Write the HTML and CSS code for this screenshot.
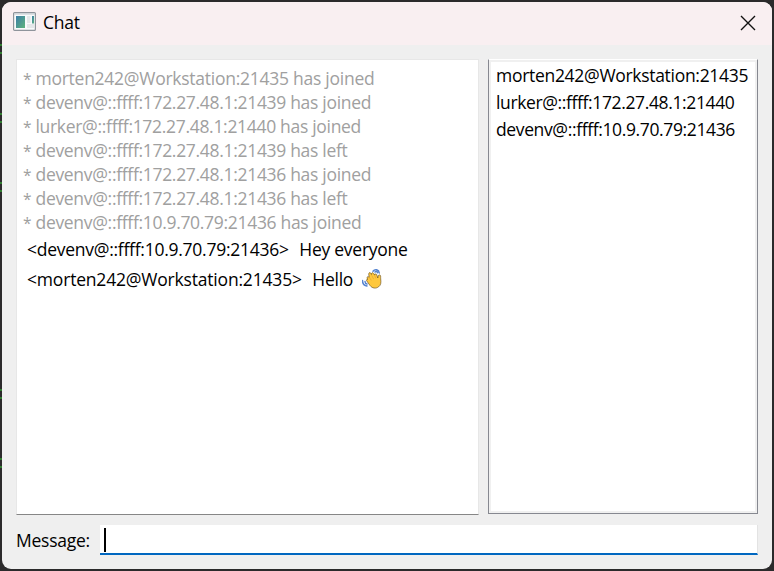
FILE: index.html
```html
<!DOCTYPE html>
<html lang="en">
<head>
<meta charset="utf-8">
<title>Chat</title>
<link rel="stylesheet" href="styles.css">
</head>
<body>
<svg class="backdrop" width="2" height="571" viewBox="0 0 2 571"><path d="M1 44v2M1 52v2M1 113v2M1 121v2M1 182v2M1 190v2M1 389v2M1 397v2M1 458v2M1 466v2" stroke="#2f7d2f" stroke-width="2"/></svg>
<div class="window">
  <header class="titlebar">
    <svg class="app-icon" width="23" height="20" viewBox="0 0 23 20">
      <defs><linearGradient id="g" x1="0" y1="0" x2="1" y2="1"><stop offset="0" stop-color="#3d7da8"/><stop offset="1" stop-color="#5db47c"/></linearGradient></defs>
      <rect x=".6" y=".6" width="21.8" height="17.8" rx="1" fill="#f8fafb" stroke="#8f949b" stroke-width="1.2"/>
      <path d="M1 2H22" stroke="#c3c8ce" stroke-width="1"/>
      <rect x="3" y="4" width="9" height="12" fill="url(#g)"/>
      <rect x="14" y="4" width="3.5" height="7" fill="#e4e7e9"/>
      <rect x="14" y="12" width="7" height="4" fill="#e4e7e9"/>
      <rect x="19" y="4" width="2" height="7.5" fill="url(#g)"/>
    </svg>
    <h1 class="title">Chat</h1>
    <svg class="close" width="16" height="16" viewBox="0 0 16 16"><path d="M1 1L15 15M15 1L1 15" stroke="#111" stroke-width="1.4" fill="none"/></svg>
  </header>
  <main class="panes">
    <section class="log">
      <p class="event"><span class="star">*</span>morten242@Workstation:21435 has joined</p>
      <p class="event tight"><span class="star">*</span>devenv@::ffff:172.27.48.1:21439 has joined</p>
      <p class="event tight"><span class="star">*</span>lurker@::ffff:172.27.48.1:21440 has joined</p>
      <p class="event tight"><span class="star">*</span>devenv@::ffff:172.27.48.1:21439 has left</p>
      <p class="event tight"><span class="star">*</span>devenv@::ffff:172.27.48.1:21436 has joined</p>
      <p class="event tight"><span class="star">*</span>devenv@::ffff:172.27.48.1:21436 has left</p>
      <p class="event tight"><span class="star">*</span>devenv@::ffff:10.9.70.79:21436 has joined</p>
      <p class="message"><span>&lt;devenv@::ffff:10.9.70.79:21436&gt;</span><span>Hey everyone</span></p>
      <p class="message"><span class="loose">&lt;morten242@Workstation:21435&gt;</span><span>Hello</span>
        <svg class="wave" role="img" aria-label="waving hand" width="22" height="22" viewBox="0 0 22 22">
          <path d="M11 3.2C13 .6 16.8 1.5 17.3 5M13 4c1-1 2.3-.6 2.500.7M.5 12.500c0 3 1.500 5 4.500 5.500M3 13.500c.1 1.400.8 2.200 2 2.500" fill="none" stroke="#5684d0" stroke-width="1.5" stroke-linecap="round"/>
          <path d="M5 9.3c.6-.9 1.6-.7 2.2.1L6.7 6.2c-.1-1.8 1.7-2.1 2.2-.7l.5 1c-.2-1.9 1.7-2.5 2.4-.9l.7 1.5c.1-1.5 1.9-1.6 2.3-.3l1 3.2c.2-1.4.4-3.2 1.7-3.1 1.6.1 1 2.1 1.2 3.9.5 4.1.2 6.3-2.1 8-2.8 2.2-6.5 1.5-8.6-1.3L4.8 13c-.8-1.2.2-2.1 1.2-1.6L5.1 10.600z" fill="#ffc83d" stroke="#5e4515" stroke-width=".6" stroke-linejoin="round"/>
          <path d="M7.3 9.3l2 3M9.6 7.100l2 4M12.600 7.200l1.200 3.100" stroke="#e0a032" stroke-width=".6" fill="none"/>
        </svg>
      </p>
    </section>
    <ul class="users">
      <li class="first">morten242@Workstation:21435</li>
      <li class="tighter">lurker@::ffff:172.27.48.1:21440</li>
      <li class="tighter">devenv@::ffff:10.9.70.79:21436</li>
    </ul>
  </main>
  <footer class="compose">
    <label class="label">Message:</label>
    <div class="input"><span class="caret"></span></div>
  </footer>
</div>
</body>
</html>
```

FILE: styles.css
```css
* { box-sizing: border-box; margin: 0; padding: 0; }
body { width: 774px; height: 571px; overflow: hidden; background: #2b2a2b; padding: 2px;
  font: 17.5px/24px "Open Sans", "Noto Sans", sans-serif; letter-spacing: -.26px; font-variant-ligatures: none; color: #000; }
.backdrop { position: absolute; left: 0; top: 0; }
.window { width: 770px; height: 567px; border-radius: 9px; background: #efefef; overflow: hidden; display: flex; flex-direction: column; }
.titlebar { height: 43px; background: #f9eff1; display: flex; align-items: center; padding: 0 16px 3px 11px; }
.title { font-size: 17.5px; font-weight: 400; margin-left: 7px; padding-bottom: 1px; flex: 1; }
.close { margin-top: 1px; }
.panes { display: flex; height: 470px; padding: 14px 14px 0; gap: 9px; }
.log { width: 463px; height: 456px; background: #fff; padding: 6px 6px; border: 1px solid #e7e7e7; border-bottom-color: #868686; }
.event { color: #a0a0a0; white-space: pre; height: 24px; }
.star { display: inline-block; width: 12.5px; font-size: 15.5px; }
.tight { letter-spacing: -.31px; }
.tighter { letter-spacing: -.37px; }
.first { letter-spacing: -.3px; }
.loose { letter-spacing: -.19px; }
.message { display: flex; gap: 10.5px; height: 30px; padding-left: 4px; align-items: center; }
.wave { margin-left: -2px; }
.users { width: 270px; height: 455px; background: #fff; border: 1px solid #868890; border-top-color: #fff;
  box-shadow: inset 0 0 0 2px #f0f0f0; list-style: none; padding: 2px 7px; }
.users li { height: 27px; line-height: 27px; white-space: pre; }
.compose { display: flex; padding: 10px 14px 0; }
.label { width: 84px; line-height: 30px; }
.input { flex: 1; height: 30px; background: #fff; border-right: 1px solid #e3e3e3; border-bottom: 2px solid #0067c0; padding: 3px 4px; }
.caret { display: block; width: 2px; height: 24px; background: #000; }
```
